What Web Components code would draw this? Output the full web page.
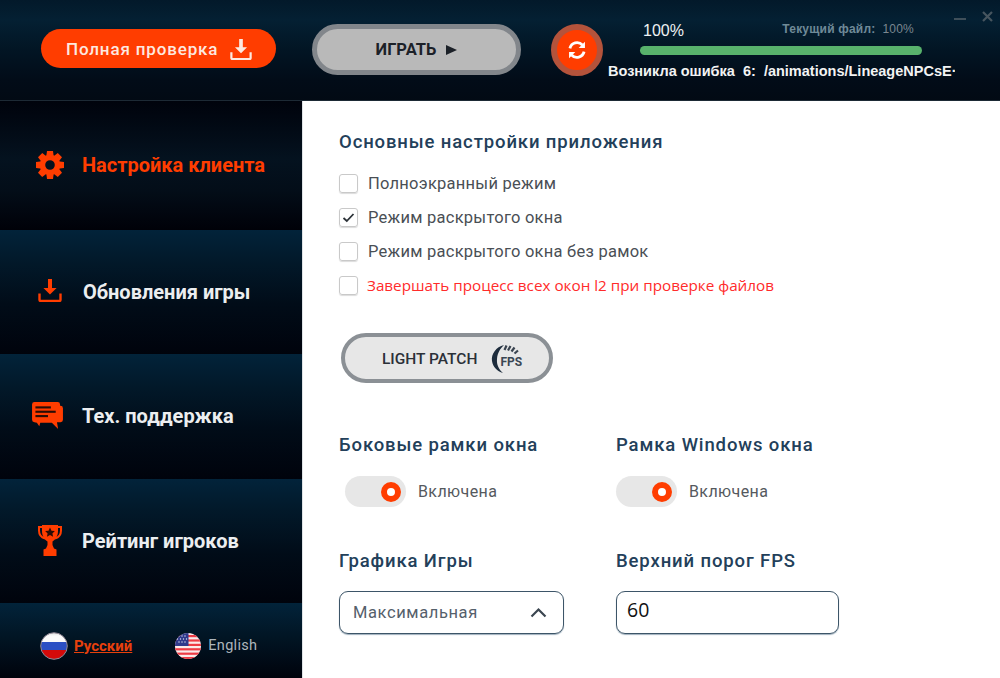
<!DOCTYPE html>
<html lang="ru">
<head>
<meta charset="utf-8">
<title>Launcher</title>
<style>
  html, body { margin: 0; padding: 0; background: #fff; }
  body { width: 1000px; height: 678px; overflow: hidden; font-family: Roboto, "Liberation Sans", sans-serif; }
</style>
</head>
<body>
<launcher-app></launcher-app>

<script>
const gearTeeth = [0, 45, 90, 135, 180, 225, 270, 315]
  .map(a => `<path d="M11 0h6l.8 6h-7.600z" transform="rotate(${a} 14 14)"/>`).join('');

const ICONS = {
  download: `<svg viewBox="0 0 24 24" width="24" height="24"><path d="M10 1h4v9h4.600L12 16.600 5.400 10H10z" fill="currentColor"/><path d="M1.500 15.500v6.200c0 .7.6 1.300 1.300 1.300h18.400c.7 0 1.300-.6 1.300-1.300v-6.200" fill="none" stroke="currentColor" stroke-width="2.400"/></svg>`,
  gear: `<svg viewBox="0 0 28 28" width="28" height="28"><g fill="currentColor">${gearTeeth}</g><circle cx="14" cy="14" r="7.500" fill="none" stroke="currentColor" stroke-width="5.400"/></svg>`,
  chat: `<svg viewBox="0 0 32 29" width="31" height="28"><path d="M2.500 0h24A2.500 2.500 0 0 1 29 2.500V4h.5A2.500 2.500 0 0 1 32 6.500v12a2.500 2.500 0 0 1-2.500 2.500H28l-3 0 .8 0 1.200 7-6.500-6.500H8.500L7.500 25 5 21.400l-2.500-.4A2.500 2.500 0 0 1 0 18.500v-16A2.500 2.500 0 0 1 2.500 0z" fill="currentColor"/><g fill="#2a0d06"><rect x="3.500" y="4.500" width="16" height="2.200"/><rect x="3.500" y="9" width="21" height="2.200"/><rect x="3.500" y="13.500" width="13" height="2.200"/></g></svg>`,
  trophy: `<svg viewBox="0 0 24 31" width="24" height="31"><path d="M5 2H1v3.500C1 10 3.500 12.500 7 13.500M19 2h4v3.500c0 4.500-2.500 7-6 8" fill="none" stroke="currentColor" stroke-width="2"/><path d="M4 0h16v6c0 5.500-3 9-5.500 10.500v3.500l1.500 3.500 2.500 1V31H5.500v-6.500l2.500-1L9.500 20v-3.500C7 15 4 11.500 4 6z" fill="currentColor"/><path d="M12 2.500l1.500 3.200 3.400.4-2.500 2.300.7 3.400-3.100-1.700-3.100 1.700.7-3.400-2.500-2.300 3.400-.4z" fill="#2a0d06"/></svg>`,
  refresh: `<svg viewBox="0 0 24 24" width="20" height="20" fill="none" stroke="#fff" stroke-width="3.400"><path d="M3.500 10A8.800 8.800 0 0 1 18.500 6"/><path d="M20.500 14A8.800 8.800 0 0 1 5.500 18"/><path d="M21.500 2v7.500H14z" fill="#fff" stroke="none"/><path d="M2.500 22v-7.500H10z" fill="#fff" stroke="none"/></svg>`,
  fps: `<svg viewBox="0 0 32 30" width="32" height="30"><path d="M13 1C5 3 0 10 1 17c1 6 5 10 11 12-4.500-4-6.500-8.500-6-14 .5-6 3-10 7-14z" fill="#1d2c3c"/><g stroke="#39434f" stroke-width="2.200"><path d="M13.500 6l2-4.500"/><path d="M17 6.500l2.500-4.500"/><path d="M20.500 7.500l3-4"/><path d="M23.500 9.500l3.500-3"/></g></svg>`,
  ru: `<svg viewBox="0 0 28 28" width="28" height="28"><defs><clipPath id="c"><circle cx="14" cy="14" r="13"/></clipPath><linearGradient id="w" x1="0" y1="0" x2="0" y2="1"><stop offset="0" stop-color="#d6d6d6"/><stop offset=".4" stop-color="#fafafa"/></linearGradient></defs><g clip-path="url(#c)"><rect width="28" height="10" fill="url(#w)"/><rect y="10" width="28" height="9" fill="#2b4fc4"/><rect y="18" width="28" height="10" fill="#d40a0a"/></g><circle cx="14" cy="14" r="13.300" fill="none" stroke="#9a8f9c" stroke-width="1"/></svg>`,
  us: `<svg viewBox="0 0 28 28" width="28" height="28"><defs><clipPath id="c"><circle cx="14" cy="14" r="13.500"/></clipPath></defs><g clip-path="url(#c)"><rect width="28" height="28" fill="#fbeaea"/><g fill="#ee3b45"><rect y="3" width="28" height="2.200"/><rect y="7.400" width="28" height="2.200"/><rect y="11.800" width="28" height="2.200"/><rect y="16.200" width="28" height="2.200"/><rect y="20.600" width="28" height="2.200"/><rect y="25" width="28" height="2.200"/></g><rect width="14.500" height="14" fill="#2f3a8c"/><g fill="#dfe3f5"><circle cx="5" cy="4" r=".7"/><circle cx="8" cy="4" r=".7"/><circle cx="11" cy="4" r=".7"/><circle cx="3.500" cy="7" r=".7"/><circle cx="6.500" cy="7" r=".7"/><circle cx="9.500" cy="7" r=".7"/><circle cx="12.500" cy="7" r=".7"/><circle cx="5" cy="10" r=".7"/><circle cx="8" cy="10" r=".7"/><circle cx="11" cy="10" r=".7"/></g></g></svg>`
};

// small helper so each element only has to give its css and markup
class ShadowEl extends HTMLElement {
  constructor() {
    super();
    this.attachShadow({ mode: 'open' });
  }
  connectedCallback() {
    this.shadowRoot.innerHTML = `<style>${this.css()}</style>${this.html()}`;
  }
  attr(name, fallback = '') { return this.getAttribute(name) ?? fallback; }
}

class LauncherApp extends ShadowEl {
  css() { return `
    :host { display: grid; grid-template-columns: 303px 697px; grid-template-rows: 101px 577px; width: 1000px; height: 678px; }
    top-bar { grid-column: 1 / 3; }
  `; }
  html() { return `
    <top-bar></top-bar>
    <side-nav></side-nav>
    <settings-panel></settings-panel>
  `; }
}

class TopBar extends ShadowEl {
  css() { return `
    :host { display: flex; position: relative; align-items: flex-start; box-sizing: border-box; padding: 24px 0 0 41px;
      background: linear-gradient(#03192a 0%, #042033 20%, #021524 50%, #020c18 80%, #020a14 100%); border-bottom: 1px solid #1d2a35; }
    .check { display: flex; align-items: center; box-sizing: border-box; width: 235px; height: 39px; margin-top: 5px; padding-left: 25px; gap: 12px;
      border-radius: 20px; background: #ff3d00; color: #fde9e0; font: 500 17px Roboto, sans-serif; letter-spacing: .85px; white-space: nowrap; }
    .check svg { width: 22px; height: 22px; }
    .play { display: flex; align-items: center; justify-content: center; gap: 10px; box-sizing: border-box; width: 209px; height: 51px; margin-left: 36px;
      border-radius: 26px; background: #b9b9b9; border: 5px solid #82868b; color: #1c2128; font: 700 16.500px Roboto, sans-serif; }
    .play i { width: 0; height: 0; border-left: 11px solid #1c2128; border-top: 5.500px solid transparent; border-bottom: 5.500px solid transparent; }
    .refresh { display: flex; align-items: center; justify-content: center; box-sizing: border-box; width: 52px; height: 52px; margin-left: 30px;
      border-radius: 50%; background: #ff3d00; border: 6px solid #b4533b; }
    .status { width: 320px; margin-left: 37px; }
    .line { display: flex; justify-content: space-between; width: 282px; height: 30px; align-items: flex-start; }
    .pct { color: #eef1f3; font: 16px "Liberation Sans", sans-serif; margin: -2px 0 0 3px; }
    .file { color: #6f8a98; font: 700 12px "Liberation Sans", sans-serif; margin: -2px 8px 0 0; letter-spacing: .2px; white-space: pre; }
    .file span { color: #7b8790; font-weight: 400; }
    .bar { width: 282px; height: 9px; margin-top: -8px; border-radius: 5px; background: #58b26c; }
    .err { margin: 8px 0 0 -32px; width: 347px; overflow: hidden; white-space: pre; color: #f2f3f3; font: 700 14.500px "Liberation Sans", sans-serif; }
    .win { position: absolute; top: 11px; right: 7px; display: flex; gap: 16px; align-items: flex-start; }
    .win svg { display: block; }
  `; }
  html() { return `
    <div class="check">Полная проверка ${ICONS.download}</div>
    <div class="play">ИГРАТЬ <i></i></div>
    <div class="refresh">${ICONS.refresh}</div>
    <div class="status">
      <div class="line"><span class="pct">100%</span><span class="file">Текущий файл:  <span>100%</span></span></div>
      <div class="bar"></div>
      <div class="err">Возникла ошибка  6:  /animations/LineageNPCsE·</div>
    </div>
    <div class="win">
      <svg width="12" height="10" viewBox="0 0 12 10"><rect y="7" width="12" height="2" fill="#3f4f5a"/></svg>
      <svg width="11" height="11" viewBox="0 0 11 11"><path d="M1 1l9 9M10 1l-9 9" stroke="#47555f" stroke-width="2.200"/></svg>
    </div>
  `; }
}

class SideNav extends ShadowEl {
  css() { return `
    :host { display: grid; grid-template-rows: 129px 124px 125px 124px 75px; background: #00020a; }
  `; }
  html() { return `
    <nav-item icon="gear" label="Настройка клиента" active></nav-item>
    <nav-item icon="download" label="Обновления игры"></nav-item>
    <nav-item icon="chat" label="Тех. поддержка"></nav-item>
    <nav-item icon="trophy" label="Рейтинг игроков"></nav-item>
    <lang-switch></lang-switch>
  `; }
}

class NavItem extends ShadowEl {
  css() { return `
    :host { display: flex; align-items: center; box-sizing: border-box; padding: 0 0 1px 32px;
      background: linear-gradient(#02233a 0%, #02192a 25%, #010c18 60%, #00030c 100%); }
    :host([active]) { background: linear-gradient(#00030c 0%, #04121f 45%, #030d18 70%, #000108 100%); }
    .icon { flex: none; display: flex; justify-content: center; align-items: center; width: 36px; height: 32px; margin-right: 14px; color: #ff3d00; }
    :host([icon="download"]) .icon { margin-top: -3px; }
    :host([icon="download"]) .label { margin-left: 1px; }
    :host([icon="chat"]) .icon { justify-content: flex-start; }
    .label { color: #eceef0; font: 700 20px Roboto, sans-serif; letter-spacing: 0; white-space: nowrap; }
    :host([active]) .label { color: #ff3d00; }
  `; }
  html() { return `
    <span class="icon">${ICONS[this.attr('icon')]}</span>
    <span class="label">${this.attr('label')}</span>
  `; }
}

class LangSwitch extends ShadowEl {
  css() { return `
    :host { display: flex; align-items: center; box-sizing: border-box; padding: 10px 0 0 40px;
      background: linear-gradient(#02233a 0%, #011524 45%, #00030c 100%); }
    .lang { display: flex; align-items: center; gap: 6px; font: 14.500px Roboto, sans-serif; color: #aeb6bc; letter-spacing: .3px; }
    .lang.on { color: #e8400c; font-size: 15px; font-weight: 700; text-decoration: underline; margin-right: 42px; letter-spacing: 0; }
    svg { display: block; }
  `; }
  html() { return `
    <div class="lang on">${ICONS.ru}<span>Русский</span></div>
    <div class="lang">${ICONS.us}<span>English</span></div>
  `; }
}

class CheckRow extends ShadowEl {
  css() { return `
    :host { display: flex; align-items: center; gap: 10px; height: 34px; color: #4a4f55; font: 16.500px Roboto, sans-serif; letter-spacing: .25px; }
    :host([danger]) { color: #ff2b2b; gap: 9px; font: 15.250px "Open Sans", sans-serif; letter-spacing: 0; }
    .box { display: flex; align-items: center; justify-content: center; box-sizing: border-box; width: 19px; height: 19px; border: 1px solid #c9c9c9; border-radius: 3px; box-shadow: 0 1px 1px #dcdcdc; }
    svg { display: block; }
  `; }
  html() {
    const tick = this.hasAttribute('checked')
      ? `<svg width="13" height="11" viewBox="0 0 13 11"><path d="M1.500 6l3.300 3L11.500 2" fill="none" stroke="#2c3238" stroke-width="1.800"/></svg>` : '';
    return `<span class="box">${tick}</span><span><slot></slot></span>`;
  }
}

class ToggleRow extends ShadowEl {
  css() { return `
    :host { display: flex; align-items: center; gap: 12px; color: #55595e; font: 16px Roboto, sans-serif; letter-spacing: .4px; }
    :host([inset]) { padding-left: 6px; }
    .track { display: flex; align-items: center; justify-content: flex-end; box-sizing: border-box; width: 61px; height: 31px; padding-right: 5px; border-radius: 16px; background: #e7e7e7; }
    .knob { box-sizing: border-box; width: 20px; height: 20px; border-radius: 50%; background: #fff; border: 6.500px solid #ff3d00; }
  `; }
  html() { return `<span class="track"><span class="knob"></span></span><span><slot></slot></span>`; }
}

class SettingsPanel extends ShadowEl {
  css() { return `
    :host { display: block; box-sizing: border-box; padding: 28px 0 0 36px; background: #fff; border-left: 1px solid #dfe3e6; margin-left: -1px; }
    h2 { margin: 0; color: #23405a; font: 500 18.500px/26px Roboto, sans-serif; letter-spacing: .88px; white-space: nowrap; }
    .checks { margin-top: 11px; }
    .patch { display: flex; align-items: center; box-sizing: border-box; width: 212px; height: 50px; margin: 31px 0 0 2px; padding: 2px 0 0 37px; gap: 14px;
      border-radius: 25px; background: #e7e7e7; border: 4px solid #8b9095; color: #2b3038; font: 500 15.500px Roboto, sans-serif; white-space: nowrap; }
    .patch .fps { display: block; position: relative; width: 32px; height: 30px; }
    .patch .fps b { position: absolute; left: 9px; top: 11px; color: #3a4653; font: 700 12px Roboto, sans-serif; }
    .grid { display: grid; grid-template-columns: 277px 240px; margin-top: 49px; }
    .cell { height: 116px; }
    .cell toggle-row { margin-top: 18px; }
    .field { display: flex; align-items: center; justify-content: space-between; box-sizing: border-box; width: 225px; height: 43px; margin-top: 17px; padding: 0 16px 0 13px;
      border: 1.500px solid #3d5568; border-radius: 9px; color: #55606b; font: 16.500px Roboto, sans-serif; letter-spacing: .6px; box-shadow: 0 1px 1px #9fb0bd; }
    .field.num { width: 223px; padding: 0 0 6px 10px; color: #111; font: 19.500px "Open Sans", sans-serif; letter-spacing: 0; }
    svg { display: block; }
  `; }
  html() { return `
    <h2>Основные настройки приложения</h2>
    <div class="checks">
      <check-row>Полноэкранный режим</check-row>
      <check-row checked>Режим раскрытого окна</check-row>
      <check-row>Режим раскрытого окна без рамок</check-row>
      <check-row danger>Завершать процесс всех окон l2 при проверке файлов</check-row>
    </div>
    <div class="patch"><span>LIGHT PATCH</span><span class="fps">${ICONS.fps}<b>FPS</b></span></div>
    <div class="grid">
      <div class="cell"><h2>Боковые рамки окна</h2><toggle-row inset>Включена</toggle-row></div>
      <div class="cell"><h2>Рамка Windows окна</h2><toggle-row>Включена</toggle-row></div>
      <div class="cell"><h2>Графика Игры</h2>
        <div class="field"><span>Максимальная</span>
          <svg width="17" height="11" viewBox="0 0 17 11"><path d="M1.500 9.500l7-7 7 7" fill="none" stroke="#3b4650" stroke-width="2.200"/></svg>
        </div>
      </div>
      <div class="cell"><h2>Верхний порог FPS</h2><div class="field num">60</div></div>
    </div>
  `; }
}

customElements.define('launcher-app', LauncherApp);
customElements.define('top-bar', TopBar);
customElements.define('side-nav', SideNav);
customElements.define('nav-item', NavItem);
customElements.define('lang-switch', LangSwitch);
customElements.define('check-row', CheckRow);
customElements.define('toggle-row', ToggleRow);
customElements.define('settings-panel', SettingsPanel);
</script>
</body>
</html>
